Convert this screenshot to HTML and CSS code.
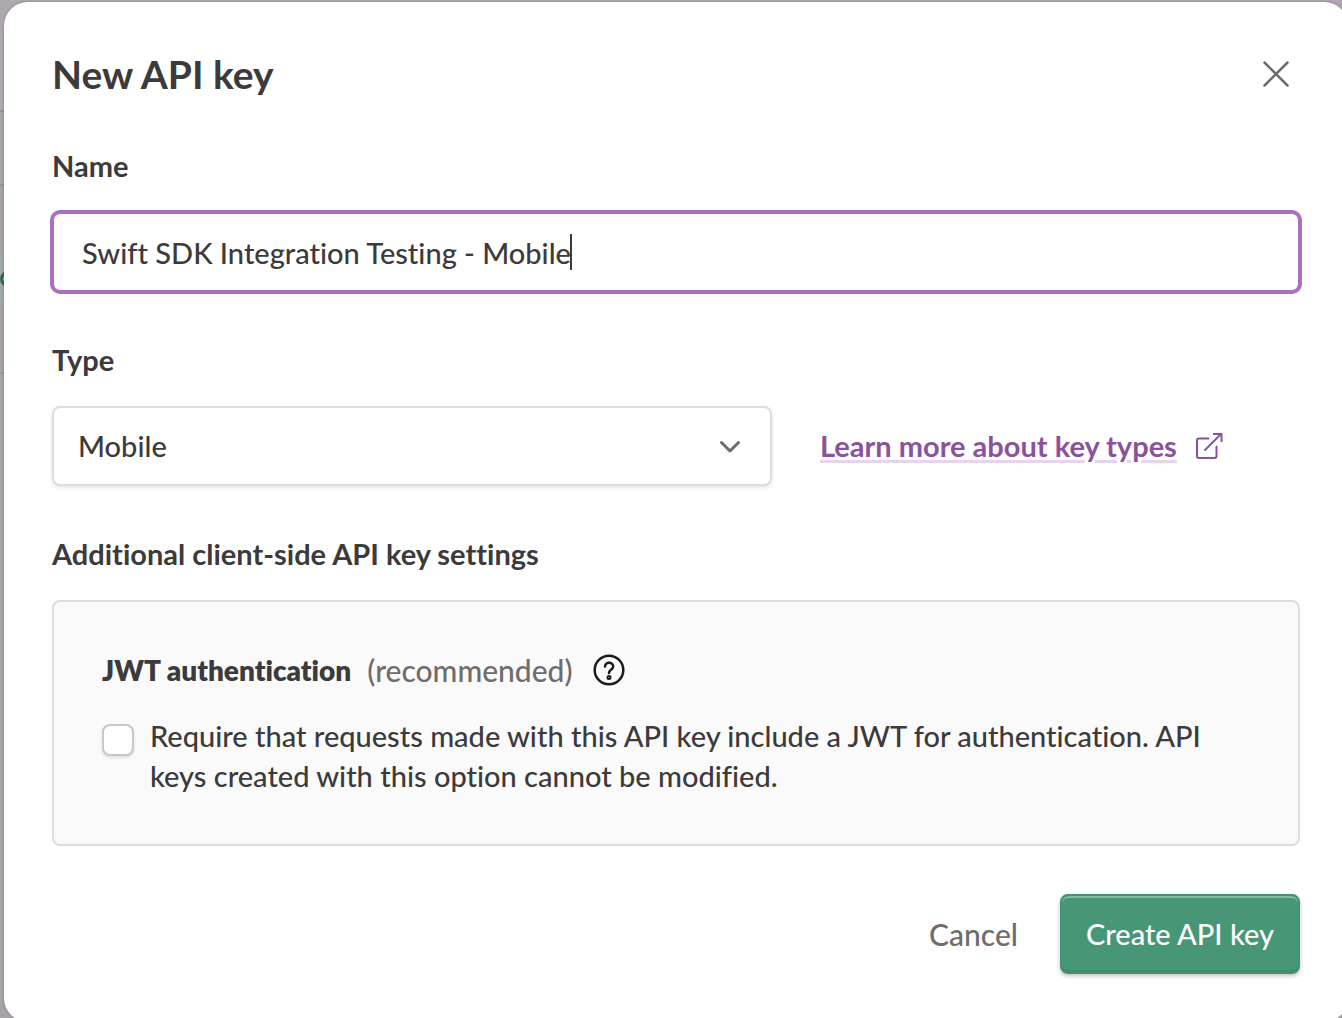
FILE: index.html
```html
<!DOCTYPE html>
<html lang="en">
<head>
<meta charset="utf-8">
<title>New API key</title>
<meta name="viewport" content="width=device-width, initial-scale=1">
<link rel="stylesheet" href="styles.css">
</head>
<body>
<div class="backdrop" aria-hidden="true">
  <div class="backdrop-row backdrop-row-head"></div>
  <div class="backdrop-row"></div>
  <div class="backdrop-row backdrop-row-key"><span class="backdrop-tag"><span class="backdrop-dot"></span></span></div>
  <div class="backdrop-row backdrop-row-rest"></div>
</div>
<form class="dialog" role="dialog" aria-labelledby="dialog-title">
  <header class="dialog-header">
    <h1 class="dialog-title" id="dialog-title">New API key</h1>
    <button class="close" type="button" aria-label="Close">
      <svg width="28" height="28" viewBox="0 0 28 28" fill="none" stroke="currentColor" stroke-width="2.5" stroke-linecap="round"><path d="M2.5 2.5l23 23M25.5 2.5l-23 23"/></svg>
    </button>
  </header>

  <div class="field">
    <label class="label" for="key-name">Name</label>
    <div class="input-wrap">
      <input class="input" id="key-name" type="text" value="Swift SDK Integration Testing - Mobile">
      <span class="caret"></span>
    </div>
  </div>

  <div class="field">
    <label class="label" for="key-type">Type</label>
    <div class="type-row">
      <div class="select-wrap">
        <select class="select" id="key-type">
          <option>Mobile</option>
        </select>
        <svg class="chevron" width="22" height="14" viewBox="0 0 22 14" fill="none" stroke="currentColor" stroke-width="3" stroke-linecap="round" stroke-linejoin="round"><path d="M2.5 2.5l8.500 8.500 8.500-8.500"/></svg>
      </div>
      <a class="link" href="#key-types"><span class="link-text">Learn more about key types</span><svg width="28" height="28" viewBox="0 0 28 28" fill="none" stroke="currentColor" stroke-width="2"><path stroke-linecap="round" stroke-linejoin="round" d="M13.500 6.500H4a2 2 0 0 0-2 2V24a2 2 0 0 0 2 2h15.500a2 2 0 0 0 2-2V14.500"/><path stroke-linecap="round" d="M10 18L26 2"/><path d="M18 2h8.500v8"/></svg></a>
    </div>
  </div>

  <section class="field">
    <h2 class="label">Additional client-side API key settings</h2>
    <div class="panel">
      <div class="panel-head">
        <h3 class="panel-title">JWT authentication</h3>
        <span class="muted">(recommended)</span>
        <button class="help" type="button" aria-label="About JWT authentication">
          <svg width="32" height="32" viewBox="0 0 32 32" fill="none" stroke="currentColor" stroke-width="2.500" stroke-linecap="round" stroke-linejoin="round"><circle cx="16" cy="16" r="14.300"/><path d="M12 12.500c0-5 8.200-5 8.200 0 0 3-4.200 3-4.200 6.500"/><circle cx="16" cy="23.500" r="1.500" stroke-width="2"/></svg>
        </button>
      </div>
      <div class="option">
        <input class="checkbox" type="checkbox" id="require-jwt">
        <label for="require-jwt">Require that requests made with this API key include a JWT for authentication. API keys created with this option cannot be modified.</label>
      </div>
    </div>
  </section>

  <footer class="actions">
    <button class="button button-plain" type="button">Cancel</button>
    <button class="button button-primary" type="submit">Create API key</button>
  </footer>
</form>
</body>
</html>
```
FILE: styles.css
```css
* { box-sizing: border-box; }

body {
  margin: 0;
  overflow: hidden;
  background: #aea7af;
  color: #3c3a3b;
  font: 500 29px/40px Lato, "Open Sans", sans-serif;
  font-variant-ligatures: none;
}

button, input, select { font: inherit; font-variant-ligatures: none; color: inherit; }
h1, h2, h3 { margin: 0; }
svg { display: block; flex: none; }

/* Dimmed page behind the dialog */
.backdrop { position: absolute; inset: 0; overflow: hidden; }
.backdrop-row { height: 74px; border-bottom: 2px solid #989299; background: #a8a2a9; }
.backdrop-row-head { height: 112px; background: #afa8b0; }
.backdrop-row-key { height: 188px; padding-top: 68px; background: #a8a2a8; }
.backdrop-row-rest { height: 100%; border: 0; }
.backdrop-tag {
  display: flex;
  align-items: center;
  width: 4px;
  height: 50px;
  overflow: hidden;
  border: solid #93aaa7;
  border-width: 2px 0;
  background: #9eaaab;
}
.backdrop-dot { flex: none; width: 16px; height: 16px; border: 3px solid #2f6b58; border-radius: 50%; }

.dialog {
  position: relative;
  display: flex;
  flex-direction: column;
  gap: 48px;
  margin: 2px -6px -4px 4px;
  padding: 48px;
  border-radius: 24px;
  background: #fff;
  box-shadow: 0 0 3px rgba(50, 40, 50, 0.3);
}

.dialog-header { display: flex; align-items: center; justify-content: space-between; }
.dialog-title { font-size: 39px; font-weight: 700; line-height: 48px; }
.close { padding: 0 10px; border: 0; background: none; color: #716b6c; }

.field { display: flex; flex-direction: column; gap: 26px; }
.label { font-size: 29px; font-weight: 700; line-height: 40px; }

.input-wrap { position: relative; display: flex; }
.input {
  flex: 1;
  height: 80px;
  padding: 0 28px;
  border: 2px solid #ab6ec3;
  border-radius: 8px;
  outline: 0;
  background: #fff;
  box-shadow: 0 0 0 2px #ab6ec3;
  caret-color: transparent;
}
.caret { position: absolute; left: 518px; top: 22px; width: 2px; height: 36px; background: #3c3a3b; }

.type-row { display: flex; align-items: center; gap: 48px; }
.select-wrap { position: relative; width: 720px; }
.select {
  display: block;
  width: 100%;
  height: 80px;
  padding: 0 24px;
  appearance: none;
  border: 2px solid #dedddd;
  border-radius: 8px;
  background: #fff;
  box-shadow: 0 2px 4px rgba(0, 0, 0, 0.1);
}
.chevron { position: absolute; right: 31px; top: 34px; color: #716b6c; pointer-events: none; }

.link { display: flex; align-items: center; gap: 18px; color: #8c519e; font-weight: 700; text-decoration: none; }
.link-text {
  text-decoration: underline;
  text-decoration-color: #e7d3ee;
  text-decoration-thickness: 3px;
  text-underline-offset: 3px;
}

.panel {
  display: flex;
  flex-direction: column;
  gap: 26px;
  padding: 48px;
  border: 2px solid #dedddd;
  border-radius: 8px;
  background: #fafafa;
}
.panel-head { display: flex; align-items: center; gap: 16px; }
.panel-title { font-size: 28px; font-weight: 800; line-height: 40px; }
.muted { color: #716b6c; font-size: 30px; }
.help { margin-left: 4px; padding: 0; border: 0; background: none; color: #1c1b1b; }

.option { display: flex; align-items: flex-start; gap: 16px; }
.checkbox {
  flex: none;
  width: 32px;
  height: 32px;
  margin: 8px 0 0;
  appearance: none;
  border: 2px solid #c9c7c8;
  border-radius: 8px;
  background: #fff;
  box-shadow: 0 2px 3px rgba(0, 0, 0, 0.1);
}

.actions { display: flex; justify-content: flex-end; gap: 16px; }
.button { height: 80px; padding: 0 26px; border: 0; border-radius: 8px; }
.button-plain { background: none; color: #716b6c; font-size: 30px; }
.button-primary {
  min-width: 240px;
  padding: 0 16px;
  border: 2px solid #449272;
  background: #479776;
  color: #fff;
  box-shadow: inset 0 2px 0 #82b99f, inset 0 -2px 0 #3f8b6b, 0 2px 4px rgba(0, 0, 0, 0.25);
}
```
